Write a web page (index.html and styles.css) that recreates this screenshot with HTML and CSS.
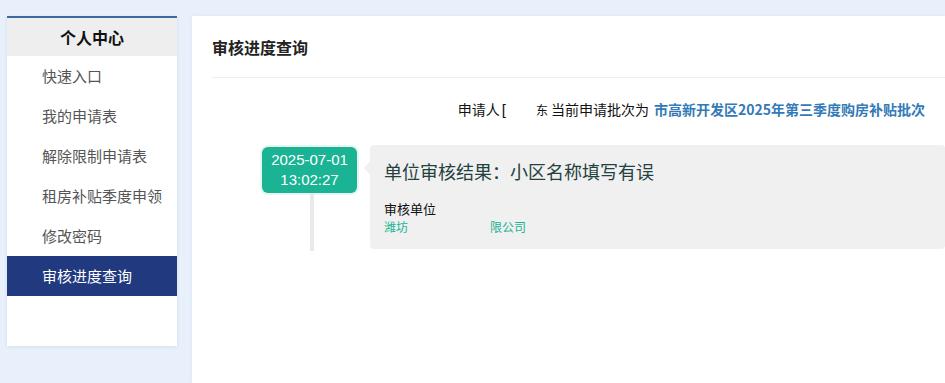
FILE: index.html
```html
<!DOCTYPE html>
<html lang="zh-CN">
<head>
<meta charset="utf-8">
<title>审核进度查询</title>
<link rel="stylesheet" href="styles.css">
</head>
<body>
<div class="page">
  <aside class="sidebar">
    <div class="side-head">个人中心</div>
    <ul class="side-menu">
      <li class="side-item">快速入口</li>
      <li class="side-item">我的申请表</li>
      <li class="side-item">解除限制申请表</li>
      <li class="side-item">租房补贴季度申领</li>
      <li class="side-item">修改密码</li>
      <li class="side-item active">审核进度查询</li>
    </ul>
  </aside>
  <main class="main">
    <div class="main-head">审核进度查询</div>
    <div class="info-row">
      <span>申请人</span><span class="frag-l">[</span><span class="gap"></span><span class="frag-r">东</span><span>当前申请批次为</span>
      <strong class="batch">市高新开发区2025年第三季度购房补贴批次</strong>
    </div>
    <div class="timeline">
      <div class="tl-left">
        <div class="tl-date">2025-07-01<br>13:02:27</div>
        <div class="tl-line"></div>
      </div>
      <div class="tl-card">
        <div class="tl-title">单位审核结果：小区名称填写有误</div>
        <div class="tl-label">审核单位</div>
        <div class="tl-unit"><span>潍坊</span><span class="unit-gap"></span><span>限公司</span></div>
      </div>
    </div>
  </main>
</div>
</body>
</html>
```
FILE: styles.css
```css
* { box-sizing: border-box; }
html, body { margin: 0; padding: 0; }
body {
  background: #e8f0fb;
  font-family: "Noto Sans CJK SC", "Liberation Sans", sans-serif;
  overflow: hidden;
  height: 383px;
}
.page {
  display: flex;
  align-items: flex-start;
  padding: 16px 0 0 7px;
  gap: 15px;
  height: 383px;
  overflow: hidden;
}
.sidebar {
  width: 170px;
  flex: none;
  background: #fff;
  border-top: 2px solid #3b6a9c;
  box-shadow: 0 1px 4px rgba(0,0,0,0.08);
  padding-bottom: 50px;
}
.side-head {
  height: 38px;
  background: #eeeeee;
  font-size: 16px;
  font-weight: bold;
  color: #111;
  text-align: center;
  line-height: 38px;
}
.side-menu { list-style: none; margin: 0; padding: 0; }
.side-item {
  height: 40px;
  line-height: 40px;
  padding-left: 35px;
  font-size: 15px;
  color: #555;
}
.side-item.active {
  background: #213a7f;
  color: #fff;
}
.main {
  flex: 1;
  background: #fff;
  height: 367px;
  padding-left: 20px;
  box-shadow: 0 0 4px rgba(0,0,0,0.05);
}
.main-head {
  height: 62px;
  line-height: 62px;
  font-size: 16px;
  font-weight: bold;
  color: #222;
  border-bottom: 1px solid #eeeeee;
}
.info-row {
  display: flex;
  justify-content: flex-end;
  align-items: center;
  padding-right: 20px;
  height: 20px;
  margin-top: 21px;
  font-size: 14px;
  color: #111;
  white-space: nowrap;
}
.frag-l {
  font-family: "Liberation Sans", sans-serif;
  font-size: 15px;
  margin-left: 2px;
}
.gap { display: inline-block; width: 30px; }
.frag-r {
  font-size: 12px;
  margin-right: 3px;
}
.batch {
  color: #337ab7;
  margin-left: 5px;
}
.timeline {
  display: flex;
  margin-top: 26px;
  padding-left: 50px;
}
.tl-left {
  width: 95px;
  flex: none;
  display: flex;
  flex-direction: column;
  align-items: center;
  padding-top: 2px;
}
.tl-date {
  width: 95px;
  height: 46px;
  background: #1ab394;
  color: #fff;
  border-radius: 6px;
  box-shadow: 0 0 0 2px #e6f6f1;
  font-family: "Liberation Sans", "Noto Sans CJK SC", sans-serif;
  font-size: 15px;
  line-height: 20px;
  text-align: center;
  padding-top: 3px;
}
.tl-line {
  width: 4px;
  height: 58px;
  background: #e9e9e9;
  margin-left: 4px;
}
.tl-card {
  flex: 1;
  margin-left: 13px;
  height: 104px;
  background: #f0f0f0;
  border-radius: 4px;
  padding: 14px 14px 0;
  position: relative;
}
.tl-card::before {
  content: "";
  position: absolute;
  left: -6px;
  top: 16px;
  border-top: 7px solid transparent;
  border-bottom: 7px solid transparent;
  border-right: 6px solid #f0f0f0;
}
.tl-title {
  font-size: 18px;
  line-height: 24px;
  color: #24403f;
}
.tl-label {
  margin-top: 17px;
  font-size: 13px;
  line-height: 18px;
  color: #111;
}
.tl-unit {
  font-size: 12px;
  line-height: 18px;
  color: #1ab394;
}
.unit-gap { display: inline-block; width: 82px; }
```
